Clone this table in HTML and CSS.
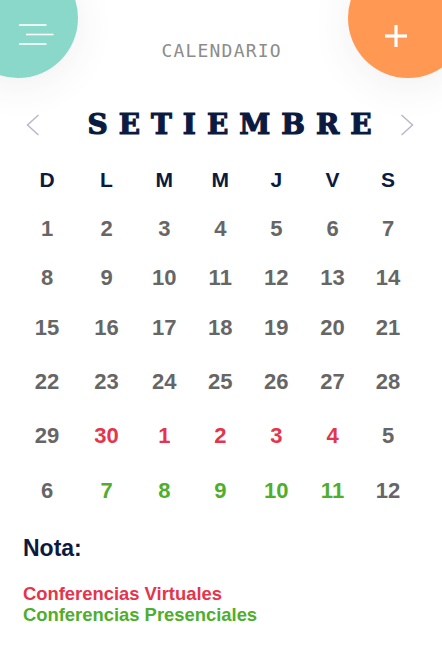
FILE: index.html
```html
<!DOCTYPE html>
<html lang="es">
<head>
<meta charset="utf-8">
<title>Calendario</title>
<link rel="stylesheet" href="styles.css">
</head>
<body>
<div class="screen">
  <button class="fab fab-menu" aria-label="Menú">
    <svg width="36" height="22" viewBox="0 0 36 22">
      <line x1="0" y1="1" x2="27.5" y2="1" />
      <line x1="7" y1="10.5" x2="34.5" y2="10.5" />
      <line x1="0" y1="20" x2="27.5" y2="20" />
    </svg>
  </button>
  <button class="fab fab-add" aria-label="Agregar">
    <svg width="22" height="22" viewBox="0 0 22 22">
      <line x1="0" y1="11" x2="22" y2="11" />
      <line x1="11" y1="0" x2="11" y2="22" />
    </svg>
  </button>

  <header class="topbar">
    <h1 class="app-title">CALENDARIO</h1>
  </header>

  <div class="month-nav">
    <svg class="chev" width="14" height="22" viewBox="0 0 14 22"><polyline points="12.5,1 1.5,11 12.5,21" /></svg>
    <h2 class="month">SETIEMBRE</h2>
    <svg class="chev" width="14" height="22" viewBox="0 0 14 22"><polyline points="1.5,1 12.5,11 1.5,21" /></svg>
  </div>

  <div class="cal">
    <span class="dow">D</span><span class="dow">L</span><span class="dow">M</span><span class="dow">M</span><span class="dow">J</span><span class="dow">V</span><span class="dow">S</span>
    <span class="d">1</span><span class="d">2</span><span class="d">3</span><span class="d">4</span><span class="d">5</span><span class="d">6</span><span class="d">7</span>
    <span class="d">8</span><span class="d">9</span><span class="d">10</span><span class="d">11</span><span class="d">12</span><span class="d">13</span><span class="d">14</span>
    <span class="d">15</span><span class="d">16</span><span class="d">17</span><span class="d">18</span><span class="d">19</span><span class="d">20</span><span class="d">21</span>
    <span class="d">22</span><span class="d">23</span><span class="d">24</span><span class="d">25</span><span class="d">26</span><span class="d">27</span><span class="d">28</span>
    <span class="d">29</span><span class="d v">30</span><span class="d v">1</span><span class="d v">2</span><span class="d v">3</span><span class="d v">4</span><span class="d">5</span>
    <span class="d">6</span><span class="d p">7</span><span class="d p">8</span><span class="d p">9</span><span class="d p">10</span><span class="d p">11</span><span class="d">12</span>
  </div>

  <section class="note">
    <h3 class="note-title">Nota:</h3>
    <p class="legend legend-v">Conferencias Virtuales</p>
    <p class="legend legend-p">Conferencias Presenciales</p>
  </section>
</div>
</body>
</html>
```

FILE: styles.css
```css
html, body {
  margin: 0;
  padding: 0;
  background: #ffffff;
}

.screen {
  position: relative;
  width: 442px;
  height: 670px;
  overflow: hidden;
  background: #ffffff;
  font-family: "Liberation Sans", Arial, sans-serif;
}

.fab {
  position: absolute;
  border: none;
  padding: 0;
  margin: 0;
  display: flex;
  align-items: center;
  justify-content: center;
  box-shadow: 0 8px 40px rgba(60, 60, 60, 0.08);
}

.fab-menu {
  left: -42px;
  top: -42px;
  width: 120px;
  height: 120px;
  border-radius: 50%;
  background: #89d8c9;
}

.fab-menu svg {
  position: absolute;
  left: 61px;
  top: 66px;
}

.fab-menu line {
  stroke: #ffffff;
  stroke-width: 1.6;
}

.fab-add {
  left: 348px;
  top: -42px;
  width: 120px;
  height: 120px;
  border-radius: 50% 14px 50% 50%;
  background: #ff9852;
}

.fab-add svg {
  position: absolute;
  left: 37px;
  top: 67px;
}

.fab-add line {
  stroke: #ffffff;
  stroke-width: 3.2;
}

.topbar {
  padding-top: 41px;
  display: flex;
  justify-content: center;
}

.app-title {
  margin: 0;
  font-family: "DejaVu Sans Mono", "Liberation Mono", monospace;
  font-weight: normal;
  font-size: 18px;
  line-height: 20px;
  letter-spacing: 1.2px;
  padding-left: 1.2px;
  color: #8c8c8c;
}

.month-nav {
  margin-top: 44px;
  height: 40px;
  padding: 0 28px 0 26px;
  display: flex;
  align-items: center;
  justify-content: space-between;
}

.chev polyline {
  fill: none;
  stroke: #b6b9c9;
  stroke-width: 1.5;
}

.month {
  margin: 0;
  font-family: "DejaVu Serif", "Liberation Serif", serif;
  font-weight: bold;
  font-size: 28px;
  line-height: 40px;
  letter-spacing: 11px;
  padding-left: 19px;
  margin-right: -11px;
  color: #0a1a40;
  -webkit-text-stroke: 1.2px #0a1a40;
}

.cal {
  margin-top: 9.5px;
  margin-left: 17px;
  display: grid;
  grid-template-columns: 60px 59px 56.5px 55.5px 56.5px 56px 55px;
  grid-template-rows: 50px 48.75px 48.75px 52.25px 54.75px 54.5px 54px;
  font-weight: bold;
}

.cal span {
  display: flex;
  align-items: center;
  justify-content: center;
}

.dow {
  font-size: 21px;
  color: #0b1a3e;
}

.d {
  font-size: 22px;
  color: #666666;
}

.d.v {
  color: #e5344b;
}

.d.p {
  color: #4fae2b;
}

.note {
  margin-top: 17px;
  padding-left: 23px;
}

.note-title {
  margin: 0;
  font-size: 23px;
  line-height: 26px;
  font-weight: bold;
  color: #0b1a3e;
}

.legend {
  margin: 0;
  font-size: 18.4px;
  line-height: 21.5px;
  font-weight: bold;
}

.legend-v {
  margin-top: 22px;
  color: #e5344b;
}

.legend-p {
  color: #4fae2b;
}
```
